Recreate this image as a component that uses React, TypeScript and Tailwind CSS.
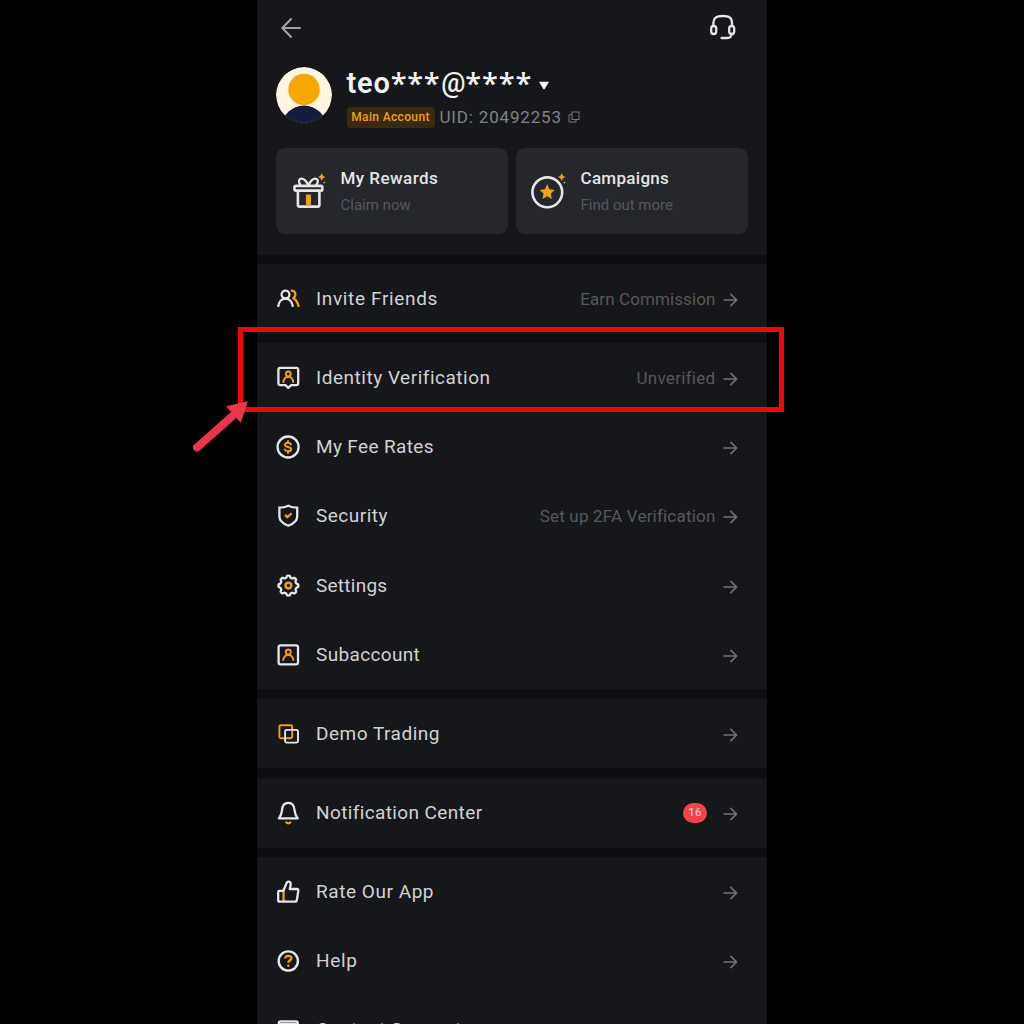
import React from "react";

const W = "#e6e6e6";
const O = "#f0a010";

const gearPath =
  Array.from({ length: 160 }, (_, i) => {
    const a = (i / 160) * Math.PI * 2;
    const r = 9 + 0.95 * Math.tanh(2.2 * Math.cos(8 * a));
    return `${i ? "L" : "M"}${(12 + r * Math.sin(a)).toFixed(2)} ${(12 - r * Math.cos(a)).toFixed(2)}`;
  }).join("") + "z";

function Svg({ children }: { children: React.ReactNode }) {
  return (
    <svg width="24" height="24" viewBox="0 0 24 24" fill="none" stroke={W} strokeWidth={2.3} strokeLinecap="round" strokeLinejoin="round" className="shrink-0 overflow-visible">
      {children}
    </svg>
  );
}

const icons: Record<string, React.ReactNode> = {
  invite: (
    <Svg>
      <path d="M14.8 3.600c2.700-.3 4.600 1.300 4.600 3.900 0 1.800-1 2.900-2.100 3.700 2.800 1.500 4.700 4.500 5.300 8.600" stroke={O} strokeLinecap="butt" />
      <circle cx="9.500" cy="7.600" r="3.900" />
      <path d="M2.200 19.800c.4-4.700 3.200-8.300 7.300-8.300s6.900 3.600 7.300 8.300" strokeLinecap="butt" />
    </Svg>
  ),
  identity: (
    <Svg>
      <path d="M4.300 1.800h16a1.900 1.900 0 0 1 1.900 1.900v13.600a1.900 1.900 0 0 1-1.900 1.900h-5.200L12.300 21.900l-2.800-2.700H4.300a1.900 1.900 0 0 1-1.900-1.900V3.700a1.900 1.900 0 0 1 1.900-1.900z" />
      <circle cx="12.300" cy="8" r="2.400" stroke={O} strokeWidth="2" />
      <path d="M7.400 16.800c0-3.500 2-6 4.900-6s4.900 2.500 4.900 6" stroke={O} strokeWidth="2" strokeLinecap="butt" />
    </Svg>
  ),
  fee: (
    <Svg>
      <circle cx="12.100" cy="12" r="10.500" />
      <path d="M15 9.400c-.4-1.100-1.500-1.600-3-1.600-1.800 0-3 .7-3 2s1.200 1.900 3 2.200 3.100.8 3.100 2.200-1.300 2.100-3.100 2.100c-1.600 0-2.800-.6-3.200-1.800M12 6v1.800M12 16.300V18" stroke={O} strokeWidth="2" />
    </Svg>
  ),
  security: (
    <Svg>
      <path d="M12.300 1.700c3 1.600 6 2 8.900 2v8.700c0 4.500-4.300 7.400-8.900 9.400-4.600-2-8.900-4.900-8.900-9.400V3.700c2.900 0 5.900-.4 8.900-2z" strokeLinejoin="miter" />
      <path d="M9 10.900l2.300 2.300 4.300-3.900" stroke={O} strokeWidth={2.400} strokeLinecap="butt" strokeLinejoin="miter" />
    </Svg>
  ),
  settings: (
    <Svg>
      <path d={gearPath} transform="translate(.4 -.4)" />
      <circle cx="12.400" cy="11.600" r="2.900" stroke={O} />
    </Svg>
  ),
  sub: (
    <Svg>
      <rect x="2.600" y="2.400" width="19.400" height="19" rx="1.900" />
      <circle cx="12.300" cy="9" r="2.500" stroke={O} strokeWidth="2" />
      <path d="M7.200 17.800c0-3.500 2.100-5.900 5.100-5.900s5.100 2.400 5.100 5.900" stroke={O} strokeWidth="2" strokeLinecap="butt" />
    </Svg>
  ),
  demo: (
    <Svg>
      <rect x="3.400" y="3.200" width="12.800" height="13" rx="1.500" stroke={O} strokeWidth={1.900} />
      <rect x="9.100" y="7.900" width="12.900" height="12.700" rx="1.500" strokeWidth={1.900} />
    </Svg>
  ),
  bell: (
    <Svg>
      <path d="M2.900 17.400h18.800c-1.900-2.300-2.800-4.900-3.100-8.100-.4-5-3-7.400-6.300-7.400s-5.900 2.400-6.300 7.400c-.3 3.200-1.200 5.800-3.100 8.100z" />
      <path d="M9.800 20.600c.5 1.300 1.400 1.700 2.500 1.700s2-.4 2.500-1.700" stroke={O} strokeLinecap="butt" />
    </Svg>
  ),
  rate: (
    <Svg>
      <path d="M7.600 10.500v10.500" stroke={O} />
      <path d="M3.200 10.900h4.100l2.900-6.900c.6-1.900 1.200-2.400 2.200-2.400 1.600 0 2.300 1.100 2.300 2.500 0 1.600-.5 3.300-.9 4.900h7c1.200 0 1.700.8 1.500 1.900l-1.400 8.800c-.2 1.200-.8 1.900-2 1.900H3.900c-1.100 0-1.700-.6-1.700-1.700v-7.400c0-1 .3-1.600 1-1.600z" />
    </Svg>
  ),
  help: (
    <Svg>
      <circle cx="12.300" cy="12" r="9.600" strokeWidth={2.400} />
      <path d="M9.200 9.500c0-1.700 1.200-2.700 3.100-2.700s3.100 1 3.100 2.500c0 2.200-3.100 2.200-3.100 4.500" stroke={O} strokeLinecap="butt" />
      <circle cx="12.300" cy="16.700" r="1.200" fill={O} stroke="none" />
    </Svg>
  ),
  support: (
    <Svg>
      <rect x="2.900" y="3.400" width="18.800" height="17" rx="1.600" strokeWidth={2.400} />
      <path d="M3 6h18" />
    </Svg>
  ),
};

function RightArrow() {
  return (
    <svg width="16" height="16" viewBox="0 0 16 16" fill="none" stroke="#707174" strokeWidth="1.600" className="mt-[2px] shrink-0">
      <path d="M1.400 8h13M8.400 1.900L14.500 8l-6.100 6.100" />
    </svg>
  );
}

type Item = { icon: string; label: string; track: string; note?: string; noteTrack?: string; badge?: string };

const groups: Item[][] = [
  [{ icon: "invite", label: "Invite Friends", track: "tracking-[0.65px]", note: "Earn Commission", noteTrack: "tracking-[0.1px]" }],
  [
    { icon: "identity", label: "Identity Verification", track: "tracking-[0.52px]", note: "Unverified", noteTrack: "tracking-[0.3px]" },
    { icon: "fee", label: "My Fee Rates", track: "tracking-[0.35px]" },
    { icon: "security", label: "Security", track: "tracking-[0.5px]", note: "Set up 2FA Verification", noteTrack: "tracking-[0.2px]" },
    { icon: "settings", label: "Settings", track: "tracking-[0.25px]" },
    { icon: "sub", label: "Subaccount", track: "tracking-[0.35px]" },
  ],
  [{ icon: "demo", label: "Demo Trading", track: "tracking-[0.5px]" }],
  [{ icon: "bell", label: "Notification Center", track: "tracking-[0.38px]", badge: "16" }],
  [
    { icon: "rate", label: "Rate Our App", track: "tracking-[0.55px]" },
    { icon: "help", label: "Help", track: "tracking-[0.7px]" },
    { icon: "support", label: "Contact Support", track: "tracking-[0.5px]" },
  ],
];

function Row({ item }: { item: Item }) {
  return (
    <div className="flex h-[69.2px] items-center pr-[29px] pl-[19px]">
      {icons[item.icon]}
      <span className={`ml-[16px] flex-1 text-[19px] leading-6 whitespace-nowrap text-[#d2d2d3] ${item.track}`}>{item.label}</span>
      {item.note && <span className={`mr-[6.5px] text-[17px] leading-6 whitespace-nowrap text-[#57585b] ${item.noteTrack}`}>{item.note}</span>}
      {item.badge && <span className="mr-[15px] flex h-5 w-6 items-center justify-center rounded-full bg-[#ef454a] text-[11.5px] tracking-[0.3px] text-[#f8dcdc]">{item.badge}</span>}
      <RightArrow />
    </div>
  );
}

function Sparkle() {
  return (
    <>
      <path d="M29.700 1.300l1.300 2.400 2.400 1.300-2.400 1.300-1.300 2.400-1.300-2.400L26 5l2.400-1.300z" fill={O} stroke="none" />
      <circle cx="32.400" cy="10.600" r=".9" fill={O} stroke="none" />
    </>
  );
}

function Card({ icon, title, track, sub }: { icon: React.ReactNode; title: string; track: string; sub: string }) {
  return (
    <div className="flex h-[86px] flex-1 rounded-[9px] bg-[#25272c] pl-4">
      {icon}
      <div className="ml-[12.5px] pt-[18px]">
        <div className={`text-[17px] leading-6 font-medium text-[#e4e4e5] ${track}`}>{title}</div>
        <div className="mt-[5px] text-[15px] leading-5 text-[#55575b]">{sub}</div>
      </div>
    </div>
  );
}

export default function App() {
  return (
    <div className="relative flex h-[1024px] w-full justify-center overflow-hidden bg-black font-['Roboto','Liberation_Sans',sans-serif]">
      <main className="flex h-full w-[510px] flex-col gap-[9.9px] overflow-hidden bg-[#0f0f13]">
        <header className="h-[254.5px] shrink-0 bg-[#16171a] px-[19px]">
          <div className="flex h-[54px] items-center justify-between pr-[11px] pl-[4px]">
            <svg width="22" height="22" viewBox="0 0 22 22" fill="none" stroke="#a2a3a5" strokeWidth="2" strokeLinecap="round" className="mt-[2px]">
              <path d="M20 11H2.500M11 2L2.300 11l8.700 9" />
            </svg>
            <svg width="28" height="28" viewBox="0 0 28 28" fill="none" stroke={W} strokeWidth="2.300" strokeLinecap="round">
              <path d="M4.400 13V10C4.400 4.800 7 3 13.700 3s9.300 1.800 9.300 7v3M12.500 25H18c3 0 4.500-1.500 4.500-4" />
              <rect x="2.200" y="13" width="5" height="8" rx="2.500" />
              <rect x="20.200" y="13" width="5" height="8" rx="2.500" />
            </svg>
          </div>
          <div className="mt-[13px] flex">
            <svg width="56" height="56" viewBox="0 0 56 56" className="rounded-full">
              <circle cx="28" cy="28" r="28" fill="#fff5e0" />
              <circle cx="28" cy="22.500" r="15.700" fill="#f7a600" />
              <circle cx="28" cy="61" r="22.500" fill="#161b3b" />
            </svg>
            <div className="ml-[14.5px]">
              <div className="flex h-[31px] items-center text-[29px] leading-8 font-semibold text-[#f2f2f3]">
                <span className="tracking-[0.8px]">teo</span>
                <span className="font-['Open_Sans'] tracking-[0.6px]">***</span>
                <span className="ml-[1px] text-[27px] font-medium">@</span>
                <span className="font-['Open_Sans'] tracking-[0.8px]">****</span>
                <svg width="12" height="9" viewBox="0 0 12 9" className="mt-[6px] ml-[6px]"><path d="M1 .8h10L6.800 7.800q-.8 1-1.600 0z" fill="#f2f2f3" /></svg>
              </div>
              <div className="mt-[8px] flex h-[22px] items-center">
                <span className="flex h-[21px] w-[88px] items-center justify-center rounded-[4px] bg-[#3a290f] text-[12px] font-medium tracking-[0.35px] text-[#f0a010]">Main Account</span>
                <span className="ml-[5px] text-[17px] leading-5 tracking-[0.83px] text-[#818285]">UID: 20492253</span>
                <svg width="12" height="12" viewBox="0 0 12 12" fill="none" stroke="#77787b" className="ml-[6.5px]"><rect x="4" y="1" width="7" height="7.500" /><path d="M4 3.800H1V11h7V8.500" /></svg>
              </div>
            </div>
          </div>
          <div className="mt-[20px] flex gap-[8px]">
            <Card title="My Rewards" track="tracking-[0.45px]" sub="Claim now" icon={
              <svg width="36" height="40" viewBox="0 0 36 40" fill="none" stroke={W} strokeWidth="2.600" strokeLinejoin="round" className="mt-[24px] overflow-visible">
                <rect x="2.500" y="13.900" width="27.800" height="4.700" rx="1.200" />
                <path d="M5.900 18.600V32.900a1.700 1.700 0 0 0 1.700 1.700h18.100a1.700 1.700 0 0 0 1.700-1.700V18.600" />
                <path d="M8.800 13.300C5.500 9.500 7 6.200 10 6.600c3 .4 4.700 3.200 6.400 6.700 1.700-3.500 3.400-6.300 6.400-6.700 3-.4 4.500 2.900 1.200 6.700" strokeWidth="2.300" />
                <path d="M16.400 22.500v11" stroke={O} strokeWidth="5" />
                <Sparkle />
              </svg>} />
            <Card title="Campaigns" track="tracking-[0.3px]" sub="Find out more" icon={
              <svg width="36" height="40" viewBox="0 0 36 40" fill="none" className="mt-[24px] overflow-visible">
                <circle cx="15.300" cy="20.300" r="14.900" stroke={W} strokeWidth="2.600" />
                <path d="M15.200 12.200l2.300 5 5.300.7-3.900 3.700 1 5.400-4.700-2.700-4.700 2.700 1-5.400-3.900-3.700 5.300-.7z" fill={O} />
                <Sparkle />
              </svg>} />
          </div>
        </header>
        {groups.map((g, i) => (
          <section key={i} className="shrink-0 bg-[#16171a]">{g.map((it) => <Row key={it.label} item={it} />)}</section>
        ))}
      </main>
      <div className="absolute top-[327px] left-[238px] h-[85px] w-[546px] border-[5px] border-[#ee0909]" />
      <svg width="62" height="56" viewBox="190 398 62 56" className="absolute top-[398px] left-[190px]">
        <path d="M197 447.500L237 412" stroke="#e8364c" strokeWidth="8" strokeLinecap="round" />
        <path d="M248 401.300L226 406.300l14.700 16.400z" fill="#e8364c" />
      </svg>
    </div>
  );
}
